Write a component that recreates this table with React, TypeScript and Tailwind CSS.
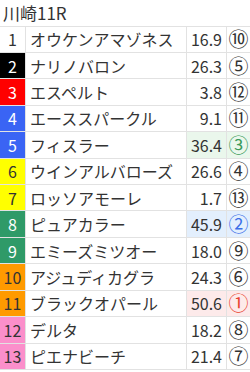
import type React from 'react';

interface Horse {
  no: number;
  name: string;
  odds: string;
  rank: string;
  hl?: 'green' | 'blue' | 'red';
}

const horses: Horse[] = [
  { no: 1, name: 'オウケンアマゾネス', odds: '16.9', rank: '⑩' },
  { no: 2, name: 'ナリノバロン', odds: '26.3', rank: '⑤' },
  { no: 3, name: 'エスペルト', odds: '3.8', rank: '⑫' },
  { no: 4, name: 'エーススパークル', odds: '9.1', rank: '⑪' },
  { no: 5, name: 'フィスラー', odds: '36.4', rank: '③', hl: 'green' },
  { no: 6, name: 'ウインアルバローズ', odds: '26.6', rank: '④' },
  { no: 7, name: 'ロッソアモーレ', odds: '1.7', rank: '⑬' },
  { no: 8, name: 'ピュアカラー', odds: '45.9', rank: '②', hl: 'blue' },
  { no: 9, name: 'エミーズミツオー', odds: '18.0', rank: '⑨' },
  { no: 10, name: 'アジュディカグラ', odds: '24.3', rank: '⑥' },
  { no: 11, name: 'ブラックオパール', odds: '50.6', rank: '①', hl: 'red' },
  { no: 12, name: 'デルタ', odds: '18.2', rank: '⑧' },
  { no: 13, name: 'ピエナビーチ', odds: '21.4', rank: '⑦' },
];

// 枠番の色
const frameClass: Record<number, string> = {
  1: 'bg-white text-[#333]',
  2: 'bg-black text-white',
  3: 'bg-[#ff0000] text-white',
  4: 'bg-[#3a64f4] text-white',
  5: 'bg-[#3a64f4] text-white',
  6: 'bg-[#ffff00] text-[#333]',
  7: 'bg-[#ffff00] text-[#333]',
  8: 'bg-[#2f9a68] text-white',
  9: 'bg-[#2f9a68] text-white',
  10: 'bg-[#ff9a00] text-[#333]',
  11: 'bg-[#ff9a00] text-[#333]',
  12: 'bg-[#fb8fcb] text-[#333]',
  13: 'bg-[#fb8fcb] text-[#333]',
};

const hlBg = {
  green: 'bg-[#eaf7ec]',
  blue: 'bg-[#e3effd]',
  red: 'bg-[#fdeaea]',
};

const hlText = {
  green: 'text-[#3a9a5b]',
  blue: 'text-[#3a6ee8]',
  red: 'text-[#e8432f]',
};

const Row: React.FC<{ horse: Horse }> = ({ horse }) => {
  const bg = horse.hl ? hlBg[horse.hl] : 'bg-white';
  const rankColor = horse.hl ? hlText[horse.hl] : 'text-[#333]';
  return (
    <div className="grid grid-cols-[26px_1fr_40px_23px] border-b border-[#e2e2e2]">
      <div className={`flex items-center justify-center text-[16px] border-r border-[#e2e2e2] ${frameClass[horse.no]}`}>
        {horse.no}
      </div>
      <div className="flex items-center pl-[4px] text-[16px] text-[#333] border-r border-[#e2e2e2] whitespace-nowrap overflow-hidden">
        {horse.name}
      </div>
      <div className={`flex items-center justify-end pr-[4px] text-[16px] text-[#333] border-r border-[#e2e2e2] ${bg}`}>
        {horse.odds}
      </div>
      <div className={`flex items-center justify-center text-[20px] leading-none ${bg} ${rankColor}`}>
        {horse.rank}
      </div>
    </div>
  );
};

export default function App() {
  return (
    <div
      className="w-[250px] h-[372px] bg-white overflow-hidden"
      style={{ fontFamily: '"Noto Sans CJK JP", "Noto Sans", sans-serif' }}
    >
      <div className="h-[370px] grid grid-rows-[repeat(14,1fr)]">
        <div className="flex items-center pl-[3px] text-[17px] text-[#333] border-b border-[#e2e2e2]">
          川崎11R
        </div>
        {horses.map((h) => (
          <Row key={h.no} horse={h} />
        ))}
      </div>
    </div>
  );
}
